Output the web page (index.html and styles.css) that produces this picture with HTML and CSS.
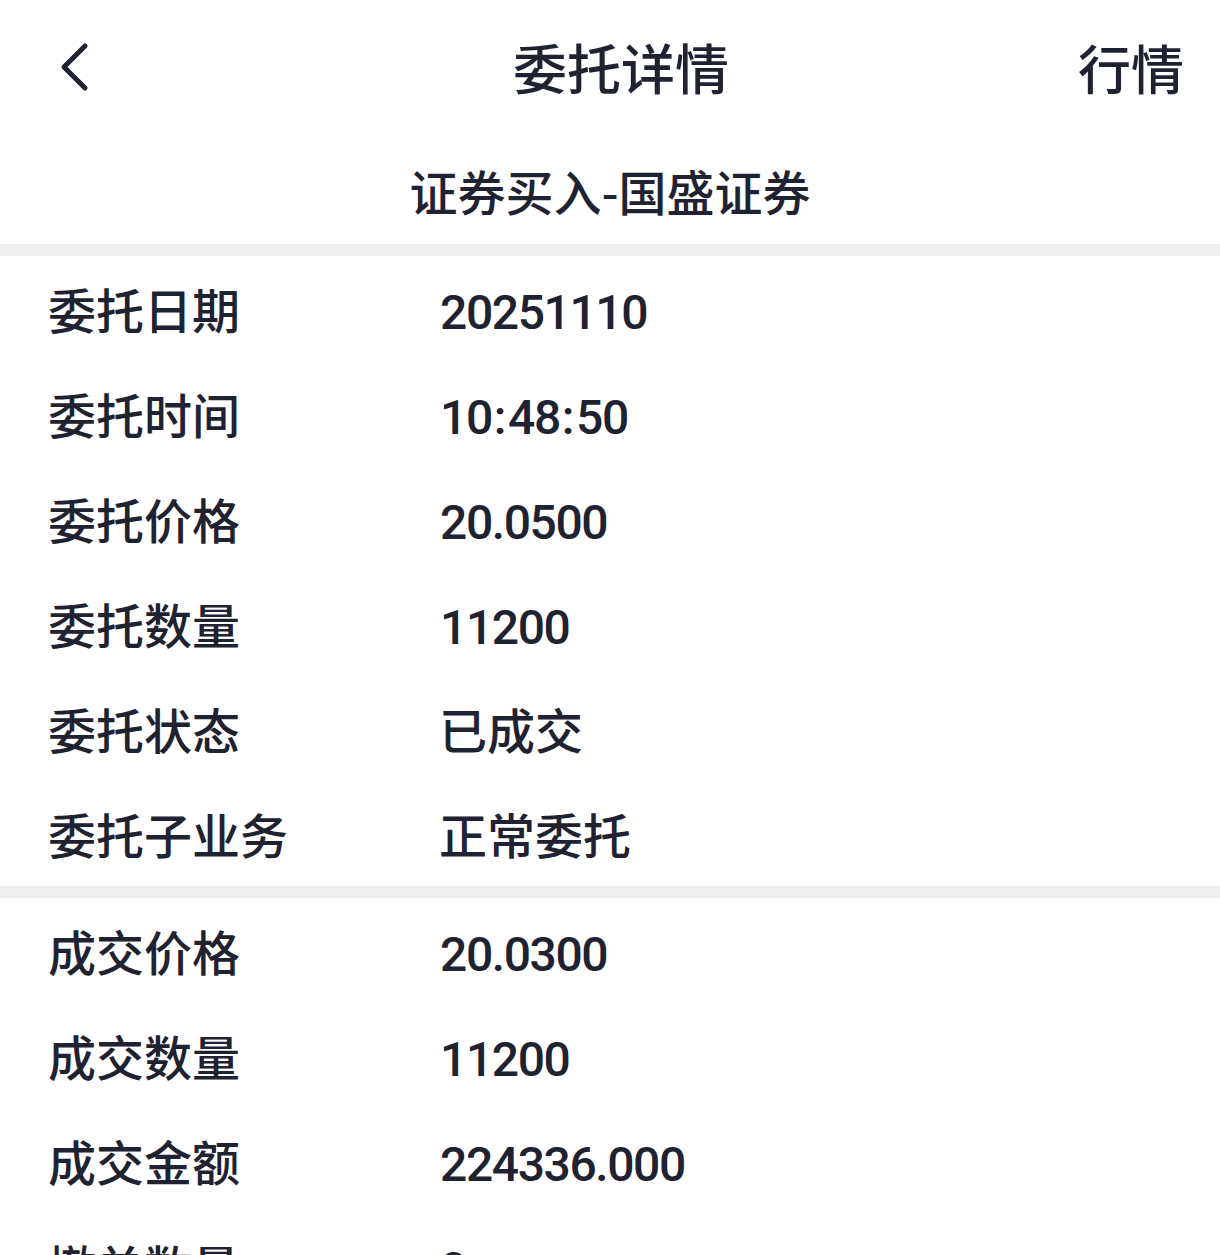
FILE: index.html
```html
<!DOCTYPE html>
<html lang="zh-CN">
<head>
<meta charset="utf-8">
<title>委托详情</title>
<link rel="stylesheet" href="styles.css">
</head>
<body>
<div class="page">
  <header class="nav">
    <div class="nav-back">
      <svg class="back-icon" width="40" height="60" viewBox="0 0 40 60">
        <path d="M25 5 L4 26 L25 47" fill="none" stroke="#1f2230" stroke-width="5" stroke-linecap="round" stroke-linejoin="round"/>
      </svg>
    </div>
    <h1 class="nav-title">委托详情</h1>
    <div class="nav-action">行情</div>
  </header>
  <div class="subtitle">证券买入-国盛证券</div>
  <div class="divider"></div>
  <section class="group">
    <div class="row"><span class="label">委托日期</span><span class="value num">20251110</span></div>
    <div class="row"><span class="label">委托时间</span><span class="value num">10<span class="colon">:</span>48<span class="colon">:</span>50</span></div>
    <div class="row"><span class="label">委托价格</span><span class="value num">20.0500</span></div>
    <div class="row"><span class="label">委托数量</span><span class="value num">11200</span></div>
    <div class="row"><span class="label">委托状态</span><span class="value">已成交</span></div>
    <div class="row"><span class="label">委托子业务</span><span class="value">正常委托</span></div>
  </section>
  <div class="divider"></div>
  <section class="group">
    <div class="row"><span class="label">成交价格</span><span class="value num">20.0300</span></div>
    <div class="row"><span class="label">成交数量</span><span class="value num">11200</span></div>
    <div class="row"><span class="label">成交金额</span><span class="value num">224336.000</span></div>
    <div class="row"><span class="label">撤单数量</span><span class="value num">0</span></div>
  </section>
</div>
</body>
</html>
```

FILE: styles.css
```css
html, body {
  margin: 0;
  padding: 0;
  background: #ffffff;
}
body {
  font-family: "Noto Sans CJK SC", "Noto Sans", sans-serif;
  color: #1f2230;
}
.page {
  width: 1220px;
  overflow: hidden;
}
.nav {
  height: 140px;
  box-sizing: border-box;
  display: flex;
  align-items: center;
  padding: 0 36px 6px 60px;
}
.nav-back {
  width: 104px;
  display: flex;
  align-items: center;
  height: 60px;
  padding-top: 8px;
}
.back-icon {
  display: block;
}
.nav-title {
  flex: 1;
  margin: 0;
  text-align: center;
  font-size: 54px;
  font-weight: 500;
  line-height: 1;
}
.nav-action {
  font-size: 53px;
  font-weight: 500;
  line-height: 1;
}
.subtitle {
  height: 104px;
  display: flex;
  align-items: center;
  justify-content: center;
  font-size: 48px;
  font-weight: 500;
  padding-bottom: 4px;
  box-sizing: border-box;
}
.divider {
  height: 12px;
  background: #eeeeee;
}
.row {
  height: 105px;
  line-height: 105px;
  padding-left: 48px;
  font-size: 48px;
  font-weight: 500;
  white-space: nowrap;
}
.label {
  display: inline-block;
  width: 391px;
}
.value {
  line-height: 1;
}
.num {
  font-family: Roboto, "Noto Sans CJK SC", sans-serif;
  font-weight: 500;
  letter-spacing: -1.4px;
  padding-left: 1px;
}
.colon {
  padding: 0 3px 0 2px;
}
```
